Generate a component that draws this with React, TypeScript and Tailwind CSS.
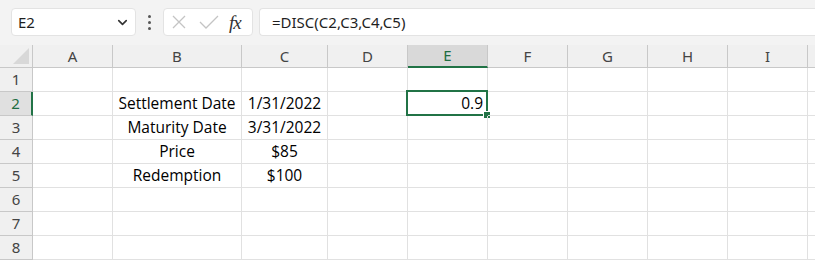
import { ChevronDown } from "lucide-react";

const cols = [
  { name: "A", w: "w-[80px]" },
  { name: "B", w: "w-[129px]" },
  { name: "C", w: "w-[86px]" },
  { name: "D", w: "w-[80px]" },
  { name: "E", w: "w-[80px]" },
  { name: "F", w: "w-[80px]" },
  { name: "G", w: "w-[80px]" },
  { name: "H", w: "w-[80px]" },
  { name: "I", w: "w-[80px]" },
  { name: "", w: "w-[80px]" },
];

const data: Record<string, string> = {
  B2: "Settlement Date",
  C2: "1/31/2022",
  B3: "Maturity Date",
  C3: "3/31/2022",
  B4: "Price",
  C4: "$85",
  B5: "Redemption",
  C5: "$100",
  E2: "0.9",
};

const rows = [1, 2, 3, 4, 5, 6, 7, 8];

const FormulaBar = () => (
  <div className="h-[45px] bg-[#f3f3f3] flex items-start pt-[8px] pl-[11px]">
    <div className="w-[125px] h-[28px] bg-white rounded-[4px] border border-[#e3e3e3] flex items-center justify-between pl-[6px] pr-[5px]">
      <span className="text-[15px] text-[#1f1f1f]">E2</span>
      <ChevronDown size={15} strokeWidth={2.6} className="text-[#333]" />
    </div>
    <div className="w-[27px] h-[28px] flex flex-col items-center justify-center gap-[3px]">
      <span className="w-[3px] h-[3px] bg-[#555] rounded-full" />
      <span className="w-[3px] h-[3px] bg-[#555] rounded-full" />
      <span className="w-[3px] h-[3px] bg-[#555] rounded-full" />
    </div>
    <div className="w-[90px] h-[28px] bg-white rounded-[4px] border border-[#e3e3e3] flex items-center pl-[7px]">
      <svg width="16" height="16" viewBox="0 0 16 16" className="mr-[12px]">
        <path d="M2 2 L14 14 M14 2 L2 14" stroke="#c4c4c4" strokeWidth="1.3" fill="none" />
      </svg>
      <svg width="20" height="16" viewBox="0 0 20 16" className="mr-[10px]">
        <path d="M1 8 L7 14 L19 2" stroke="#c4c4c4" strokeWidth="1.3" fill="none" />
      </svg>
      <span className="text-[19px] italic text-[#333] leading-none font-['Liberation_Serif',serif] tracking-[-1px]">
        fx
      </span>
    </div>
    <div className="ml-[6px] flex-1 h-[28px] bg-white rounded-l-[4px] border border-r-0 border-[#e3e3e3] flex items-center pl-[12px]">
      <span className="text-[15px] text-[#1f1f1f]">=DISC(C2,C3,C4,C5)</span>
    </div>
  </div>
);

const HeaderRow = () => (
  <div className="flex h-[23px] bg-[#f0f0f0]">
    <div className="w-[33px] shrink-0 relative border-r border-b border-[#c8c8c8]">
      <svg width="16" height="16" viewBox="0 0 16 16" className="absolute right-[3px] bottom-[3px]">
        <path d="M16 0 L16 16 L0 16 Z" fill="#d8d8d8" />
      </svg>
    </div>
    {cols.map((c, i) => {
      const sel = c.name === "E";
      return (
        <div
          key={i}
          className={`${c.w} shrink-0 flex items-center justify-center text-[15px] border-r ${
            sel
              ? "bg-[#d9d9d9] text-[#1e6e42] border-b-2 border-b-[#217346] border-r-[#c8c8c8]"
              : "text-[#444] border-b border-[#c8c8c8]"
          }`}
        >
          {c.name}
        </div>
      );
    })}
  </div>
);

const Row = ({ r }: { r: number }) => {
  const sel = r === 2;
  return (
    <div className="flex h-[24px]">
      <div
        className={`w-[33px] shrink-0 flex items-center justify-center text-[15px] border-b ${
          sel
            ? "bg-[#e0e0e0] text-[#1e6e42] border-r-2 border-r-[#217346] border-b-[#c8c8c8]"
            : "bg-[#f0f0f0] text-[#444] border-r border-[#c8c8c8]"
        }`}
      >
        {r}
      </div>
      {cols.map((c, i) => {
        const id = `${c.name}${r}`;
        const v = c.name ? data[id] : undefined;
        const active = id === "E2";
        return (
          <div
            key={i}
            className={`${c.w} shrink-0 relative flex items-center border-r border-b border-[#e1e1e1] text-[15.5px] text-black font-['Open_Sans',sans-serif] ${
              active ? "justify-end pr-[4px]" : "justify-center"
            }`}
          >
            {v}
            {active && (
              <>
                <div className="absolute left-[-2px] top-[-2px] w-[82px] h-[26px] border-2 border-[#217346]" />
                <div className="absolute right-[-4px] bottom-[-4px] w-[6px] h-[6px] bg-[#217346] border border-white box-content" />
              </>
            )}
          </div>
        );
      })}
    </div>
  );
};

export default function App() {
  return (
    <div className="w-[815px] h-[263px] overflow-hidden bg-white font-['Noto_Sans',sans-serif]">
      <FormulaBar />
      <HeaderRow />
      {rows.map((r) => (
        <Row key={r} r={r} />
      ))}
    </div>
  );
}
